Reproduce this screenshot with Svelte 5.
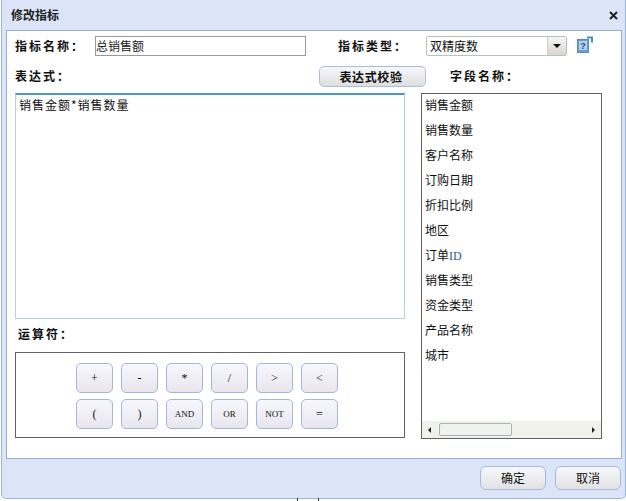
<script>
  const fields = ['销售金额','销售数量','客户名称','订购日期','折扣比例','地区','订单','销售类型','资金类型','产品名称','城市'];
  const ops = ['+','-','*','/','>','<','(',')','AND','OR','NOT','='];
</script>

<div class="dialog">
  <header class="title">
    <span>修改指标</span>
    <svg class="close" width="9" height="9" viewBox="0 0 9 9"><path d="M1 1l7 7M8 1l-7 7" stroke="#222" stroke-width="2"/></svg>
  </header>
  <section class="panel">
    <div class="row one">
      <label class="lbl name">指标名称：</label>
      <div class="input">总销售额</div>
      <label class="lbl type">指标类型：</label>
      <div class="select">
        <span class="val">双精度数</span>
        <span class="caret"><i></i></span>
      </div>
      <svg class="help" width="16" height="18" viewBox="0 0 16 18">
        <path d="M10 1.5h5v5" fill="none" stroke="#3d8fd0" stroke-width="2"/>
        <rect x="0.5" y="3.5" width="11" height="13" fill="#6f9fd0" stroke="#4f8cc4"/>
        <rect x="2" y="5" width="8" height="9" fill="#b5cfe8"/>
        <text x="6" y="12.5" font-size="9" text-anchor="middle" fill="#1f4f86" font-family="Liberation Sans" font-weight="700">?</text>
      </svg>
    </div>
    <div class="row two">
      <label class="lbl expr">表达式：</label>
      <button class="check">表达式校验</button>
      <label class="lbl field">字段名称：</label>
    </div>
    <div class="cols">
      <div class="left">
        <div class="area">销售金额*销售数量</div>
        <div class="lbl oplabel">运算符：</div>
        <div class="ops">
          {#each ops as op}
            <button class="op" class:word={op.length > 1}>{op}</button>
          {/each}
        </div>
      </div>
      <div class="list">
        <ul>
          {#each fields as f}
            <li>{f}{#if f === '订单'}<span class="id">ID</span>{/if}</li>
          {/each}
        </ul>
        <div class="hbar">
          <i class="arr l"></i>
          <span class="thumb"></span>
          <i class="arr r"></i>
        </div>
      </div>
    </div>
  </section>
  <footer class="foot">
    <button class="fbtn">确定</button>
    <button class="fbtn">取消</button>
  </footer>
</div>
<div class="ticks"><i></i><i></i></div>

<style>
  :global(body) { margin: 0; background: #fff; }
  .dialog {
    box-sizing: border-box;
    width: 625px;
    height: 499px;
    margin-left: 1px;
    border: 1px solid #9fb5da;
    border-top: 0;
    border-radius: 0 0 5px 5px;
    background-color: #dce4f7;
    font: 12px/1.2 "Noto Sans CJK SC", "Liberation Sans", sans-serif;
    color: #111;
    display: flex;
    flex-direction: column;
  }
  .title {
    height: 30px;
    flex: none;
    display: flex;
    align-items: center;
    justify-content: space-between;
    padding: 0 7px 0 9px;
    font-weight: 700;
    font-size: 12px;
    color: #222;
  }
  .panel {
    box-sizing: border-box;
    height: 429px;
    flex: none;
    margin: 0 3px 0 4px;
    background: #fff;
    border: 1px solid #93afd6;
    padding: 5px 0 0 8px;
  }
  .row { display: flex; align-items: center; }
  .lbl { font-weight: 700; letter-spacing: 2px; color: #111; font-size: 12px; white-space: nowrap; }
  .one { height: 20px; }
  .name { width: 80px; }
  .input {
    box-sizing: border-box;
    width: 211px;
    height: 20px;
    border: 1px solid #999;
    line-height: 17px;
    color: #222;
  }
  .type { margin-left: 32px; width: 88px; }
  .select {
    box-sizing: border-box;
    width: 141px;
    height: 20px;
    border: 1px solid #b4c4bc;
    border-radius: 2px;
    display: flex;
    justify-content: space-between;
    line-height: 18px;
    padding-left: 3px;
  }
  .caret {
    width: 18px;
    background: linear-gradient(#f6f6f6, #d9d5d0);
    border-left: 1px solid #ccc;
    display: flex;
    align-items: center;
    justify-content: center;
  }
  .caret i {
    border: 4px solid transparent;
    border-top: 4px solid #111;
    border-bottom: 0;
  }
  .help { margin-left: 10px; align-self: flex-start; }
  .two { height: 21px; margin-top: 10px; }
  .expr { width: 304px; }
  .check {
    box-sizing: border-box;
    width: 107px;
    height: 21px;
    border: 1px solid #a8bfe0;
    border-radius: 5px;
    background: linear-gradient(#f7f8fc, #dedee0);
    font: 700 12px/1 "Noto Sans CJK SC", sans-serif;
    letter-spacing: 0.6px;
    color: #111;
    padding: 0 3px 0 0;
  }
  .field { margin-left: 24px; }
  .cols { display: flex; gap: 16px; margin-top: 6px; }
  .left { width: 390px; }
  .area {
    box-sizing: border-box;
    height: 226px;
    border: 1px solid #b5d0ea;
    border-top: 2px solid #4f94cd;
    padding: 2px 3px;
    font-size: 12px;
    letter-spacing: 1px;
    line-height: 16px;
  }
  .oplabel {
    height: 33px;
    line-height: 30px;
    padding-left: 3px;
  }
  .ops {
    box-sizing: border-box;
    height: 86px;
    border: 1px solid #665f6b;
    padding: 10px 0 0 60px;
    display: grid;
    grid-template-columns: repeat(6, 37px);
    grid-auto-rows: 30px;
    column-gap: 8px;
    row-gap: 6px;
  }
  .op {
    border: 1px solid #9fb8dc;
    border-radius: 5px;
    background: linear-gradient(#f6f8fd, #e9e5ee);
    font: 12px/1 "Liberation Serif", serif;
    color: #111;
    padding: 0;
  }
  .op.word { font-size: 9px; }
  .list {
    box-sizing: border-box;
    width: 181px;
    height: 346px;
    border: 1px solid #665f6b;
    display: flex;
    flex-direction: column;
  }
  ul { flex: 1; margin: 0; padding: 0 0 0 3px; list-style: none; }
  li { height: 25px; line-height: 22px; font-size: 12px; }
  .id { font-family: "Liberation Serif", serif; color: #1f5aa6; }
  .hbar {
    height: 17px;
    flex: none;
    background-color: #f1f1ec;
    display: flex;
    align-items: center;
    padding: 0 6px;
  }
  .thumb {
    box-sizing: border-box;
    width: 73px;
    height: 13px;
    margin-left: 8px;
    border: 1px solid #a9b4ac;
    border-radius: 2px;
    background: #f0f1f1;
  }
  .arr { width: 0; height: 0; border: 3px solid transparent; }
  .arr.l { border-right-color: #222; border-left: 0; }
  .arr.r { border-left-color: #222; border-right: 0; margin-left: auto; }
  .foot {
    flex: 1;
    display: flex;
    justify-content: flex-end;
    gap: 9px;
    padding: 7px 4px 0 0;
  }
  .fbtn {
    box-sizing: border-box;
    width: 66px;
    height: 24px;
    border: 1px solid #a3bbdd;
    border-radius: 6px;
    background: linear-gradient(#f7f8fc, #e2e2e4);
    font: 12px/1 "Noto Sans CJK SC", sans-serif;
    color: #111;
    padding: 0;
  }
  .ticks { position: absolute; top: 498px; left: 297px; display: flex; gap: 20px; }
  .ticks i { width: 1px; height: 3px; background: #333; }
</style>
